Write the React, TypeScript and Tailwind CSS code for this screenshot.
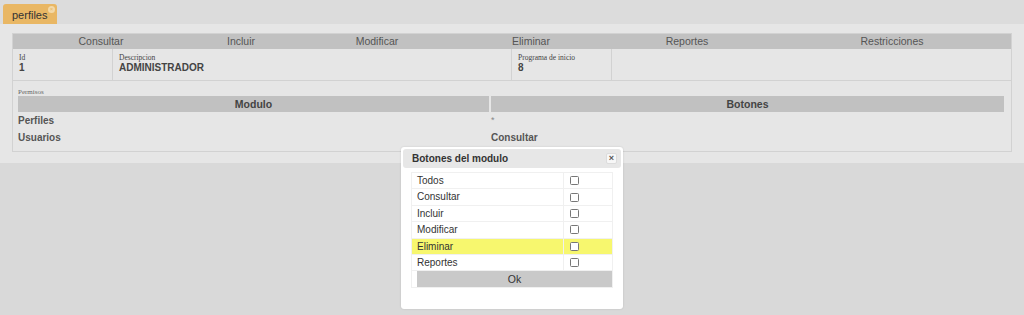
import React from 'react'

const menu = [
  { label: 'Consultar', w: 'w-[176px]' },
  { label: 'Incluir', w: 'w-[104px]' },
  { label: 'Modificar', w: 'w-[168px]' },
  { label: 'Eliminar', w: 'w-[140px]' },
  { label: 'Reportes', w: 'w-[172px]' },
  { label: 'Restricciones', w: 'flex-1' },
]

const botones = ['Todos', 'Consultar', 'Incluir', 'Modificar', 'Eliminar', 'Reportes']

export default function App() {
  return (
    <div className="w-[1024px] h-[315px] bg-[#d9d9d9] font-['Liberation_Sans',Arial,sans-serif] text-[#333] relative overflow-hidden">
      {/* Tabs */}
      <div className="h-[24px] bg-[#dcdcdc] flex items-end pl-[3px]">
        <div className="relative h-[20px] w-[54px] bg-[#e9b764] rounded-t-[3px] text-[11px] pl-[9px] pt-[3px] text-[#333]">
          perfiles
          <span className="absolute top-[2px] right-[2px] w-[7px] h-[7px] rounded-full bg-[#f3d9a8] text-[6px] leading-[7px] text-center text-[#e9b764]">×</span>
        </div>
      </div>

      {/* Content */}
      <div className="bg-[#e6e6e6] h-[139px] pt-[9px] px-[12px]">
        <div className="border border-[#d2d2d2] h-[119px] w-[1000px]">
          <div className="flex h-[15px] bg-[#c1c1c1] text-[10.5px] text-[#555] leading-[15px]">
            {menu.map((m) => (
              <div key={m.label} className={`${m.w} text-center`}>{m.label}</div>
            ))}
          </div>

          <div className="flex h-[32px] border-b border-[#d2d2d2]">
            <div className="w-[100px] border-r border-[#d2d2d2] pl-[6px] pt-[5px]">
              <div className="font-['Liberation_Serif',serif] text-[7.5px] text-[#444] leading-[8px]">Id</div>
              <div className="text-[10px] font-bold text-[#444] leading-[12px]">1</div>
            </div>
            <div className="w-[399px] border-r border-[#d2d2d2] pl-[6px] pt-[5px]">
              <div className="font-['Liberation_Serif',serif] text-[7.5px] text-[#444] leading-[8px]">Descripcion</div>
              <div className="text-[10px] font-bold text-[#444] leading-[12px]">ADMINISTRADOR</div>
            </div>
            <div className="w-[100px] border-r border-[#d2d2d2] pl-[6px] pt-[5px]">
              <div className="font-['Liberation_Serif',serif] text-[7.5px] text-[#444] leading-[8px]">Programa de inicio</div>
              <div className="text-[10px] font-bold text-[#444] leading-[12px]">8</div>
            </div>
            <div className="flex-1" />
          </div>

          <div className="px-[5px] pt-[7px]">
            <div className="font-['Liberation_Serif',serif] text-[7px] text-[#666] leading-[8px]">Permisos</div>
            <div className="flex gap-[2px] h-[16px] bg-[#e6e6e6] text-[10.5px] font-bold text-[#444] leading-[16px]">
              <div className="w-[471px] bg-[#c1c1c1] text-center">Modulo</div>
              <div className="w-[513px] bg-[#c1c1c1] text-center">Botones</div>
            </div>
            <div className="flex h-[17px] text-[10px] font-bold text-[#555] leading-[17px]">
              <div className="w-[473px]">Perfiles</div>
              <div className="font-normal text-[#888] text-[9px]">*</div>
            </div>
            <div className="flex h-[17px] text-[10px] font-bold text-[#555] leading-[17px]">
              <div className="w-[473px]">Usuarios</div>
              <div>Consultar</div>
            </div>
          </div>
        </div>
      </div>

      {/* Modal */}
      <div className="absolute left-[401px] top-[147px] w-[222px] h-[162px] bg-white rounded-[3px] p-[2px] shadow-[0_0_2px_rgba(0,0,0,0.15)]">
        <div className="h-[19px] bg-[#e7e7e7] rounded-[3px] flex items-center justify-between pl-[9px] pr-[4px]">
          <span className="text-[10px] font-bold text-[#333]">Botones del modulo</span>
          <span className="w-[11px] h-[11px] bg-[#f7f7f7] border border-[#dcdcdc] rounded-[2px] text-[9px] leading-[9px] text-center text-[#555] font-bold">×</span>
        </div>
        <div className="mt-[4px] mx-[8px] w-[202px] border border-[#f0f0f0]">
          {botones.map((b) => (
            <div
              key={b}
              className={`flex h-[16.4px] border-b border-[#f0f0f0] text-[10px] leading-[16px] text-[#333] ${b === 'Eliminar' ? 'bg-[#f7f76e]' : ''}`}
            >
              <div className="w-[152px] border-r border-[#f0f0f0] pl-[5px]">{b}</div>
              <div className="flex-1 flex items-center pl-[6px]">
                <span className="w-[9px] h-[9px] border border-[#777] rounded-[1.5px] bg-white" />
              </div>
            </div>
          ))}
          <div className="pl-[5px]">
            <div className="h-[16px] bg-[#c9c9c9] text-[10.5px] text-[#333] text-center leading-[16px]">Ok</div>
          </div>
        </div>
      </div>
    </div>
  )
}
